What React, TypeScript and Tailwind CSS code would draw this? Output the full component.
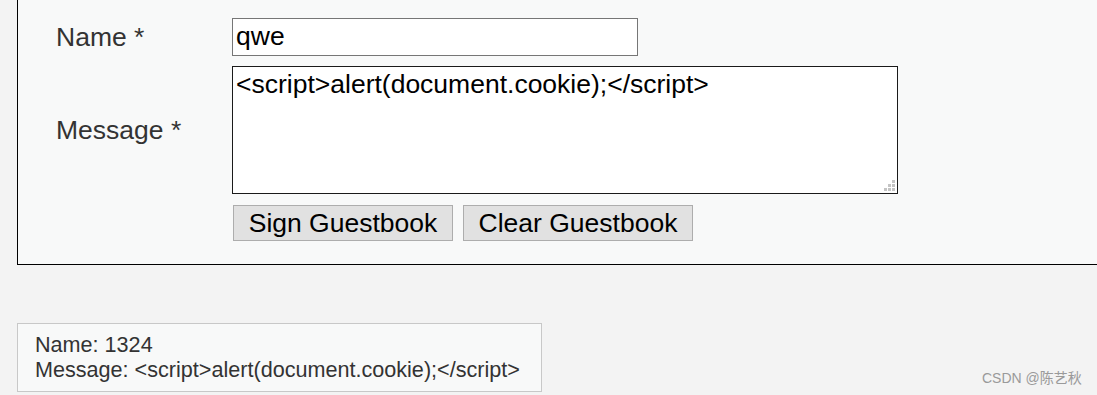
import React from "react";

function ResizeGrip() {
  const dots: [number, number][] = [
    [8, 0],
    [4, 4],
    [8, 4],
    [0, 8],
    [4, 8],
    [8, 8],
  ];
  return (
    <svg
      className="pointer-events-none absolute bottom-[3px] right-[3px]"
      width="11"
      height="11"
      viewBox="0 0 11 11"
    >
      {dots.map(([x, y], i) => (
        <rect key={i} x={x} y={y} width="3" height="3" fill="#c4c4c4" />
      ))}
    </svg>
  );
}

export default function App() {
  return (
    <div className="relative h-[395px] overflow-hidden bg-[#f3f3f3] font-['Liberation_Sans',Arial,sans-serif] text-[#333]">
      <div className="ml-[17px] w-[1200px] border-b border-l border-black bg-[#f8f9f9] pb-[23px] pl-[38px] pt-[18px]">
        <div className="grid grid-cols-[176px_auto] items-center gap-y-[10px] text-[26.5px]">
          <label className="leading-[30px]">Name *</label>
          <input
            defaultValue="qwe"
            className="h-[38px] w-[406px] border border-[#767676] bg-white px-[3px] text-[26.5px] text-black outline-none"
          />
          <label className="leading-[30px]">Message *</label>
          <div className="relative h-[128px] w-[666px]">
            <textarea
              defaultValue="<script>alert(document.cookie);</script>"
              className="block h-[128px] w-[666px] resize-none border border-[#1a1a1a] bg-white px-[3px] py-[2px] text-[26.5px] leading-[30px] text-black outline-none"
            />
            <ResizeGrip />
          </div>
          <div />
          <div className="flex gap-[10px] pl-[1px] pt-[1px]">
            <button className="h-[36px] w-[220px] border border-[#adadad] bg-[#e1e1e1] text-[26.5px] leading-[30px] text-black">
              Sign Guestbook
            </button>
            <button className="h-[36px] w-[230px] border border-[#adadad] bg-[#e1e1e1] text-[26.5px] leading-[30px] text-black">
              Clear Guestbook
            </button>
          </div>
        </div>
      </div>
      <div className="ml-[17px] mt-[58px] w-[525px] border border-[#c8c8c8] bg-[#f8f9f9] px-[17px] pb-[9px] pt-[8px] text-[21.6px] leading-[25px] text-[#333]">
        <div>Name: 1324</div>
        <div>Message: &lt;script&gt;alert(document.cookie);&lt;/script&gt;</div>
      </div>
      <div className="absolute left-[982px] top-[370px] font-['Liberation_Sans','Noto_Sans_CJK_SC',sans-serif] text-[14px] leading-[16px] text-[#9a9a9a]">
        CSDN @陈艺秋
      </div>
    </div>
  );
}
